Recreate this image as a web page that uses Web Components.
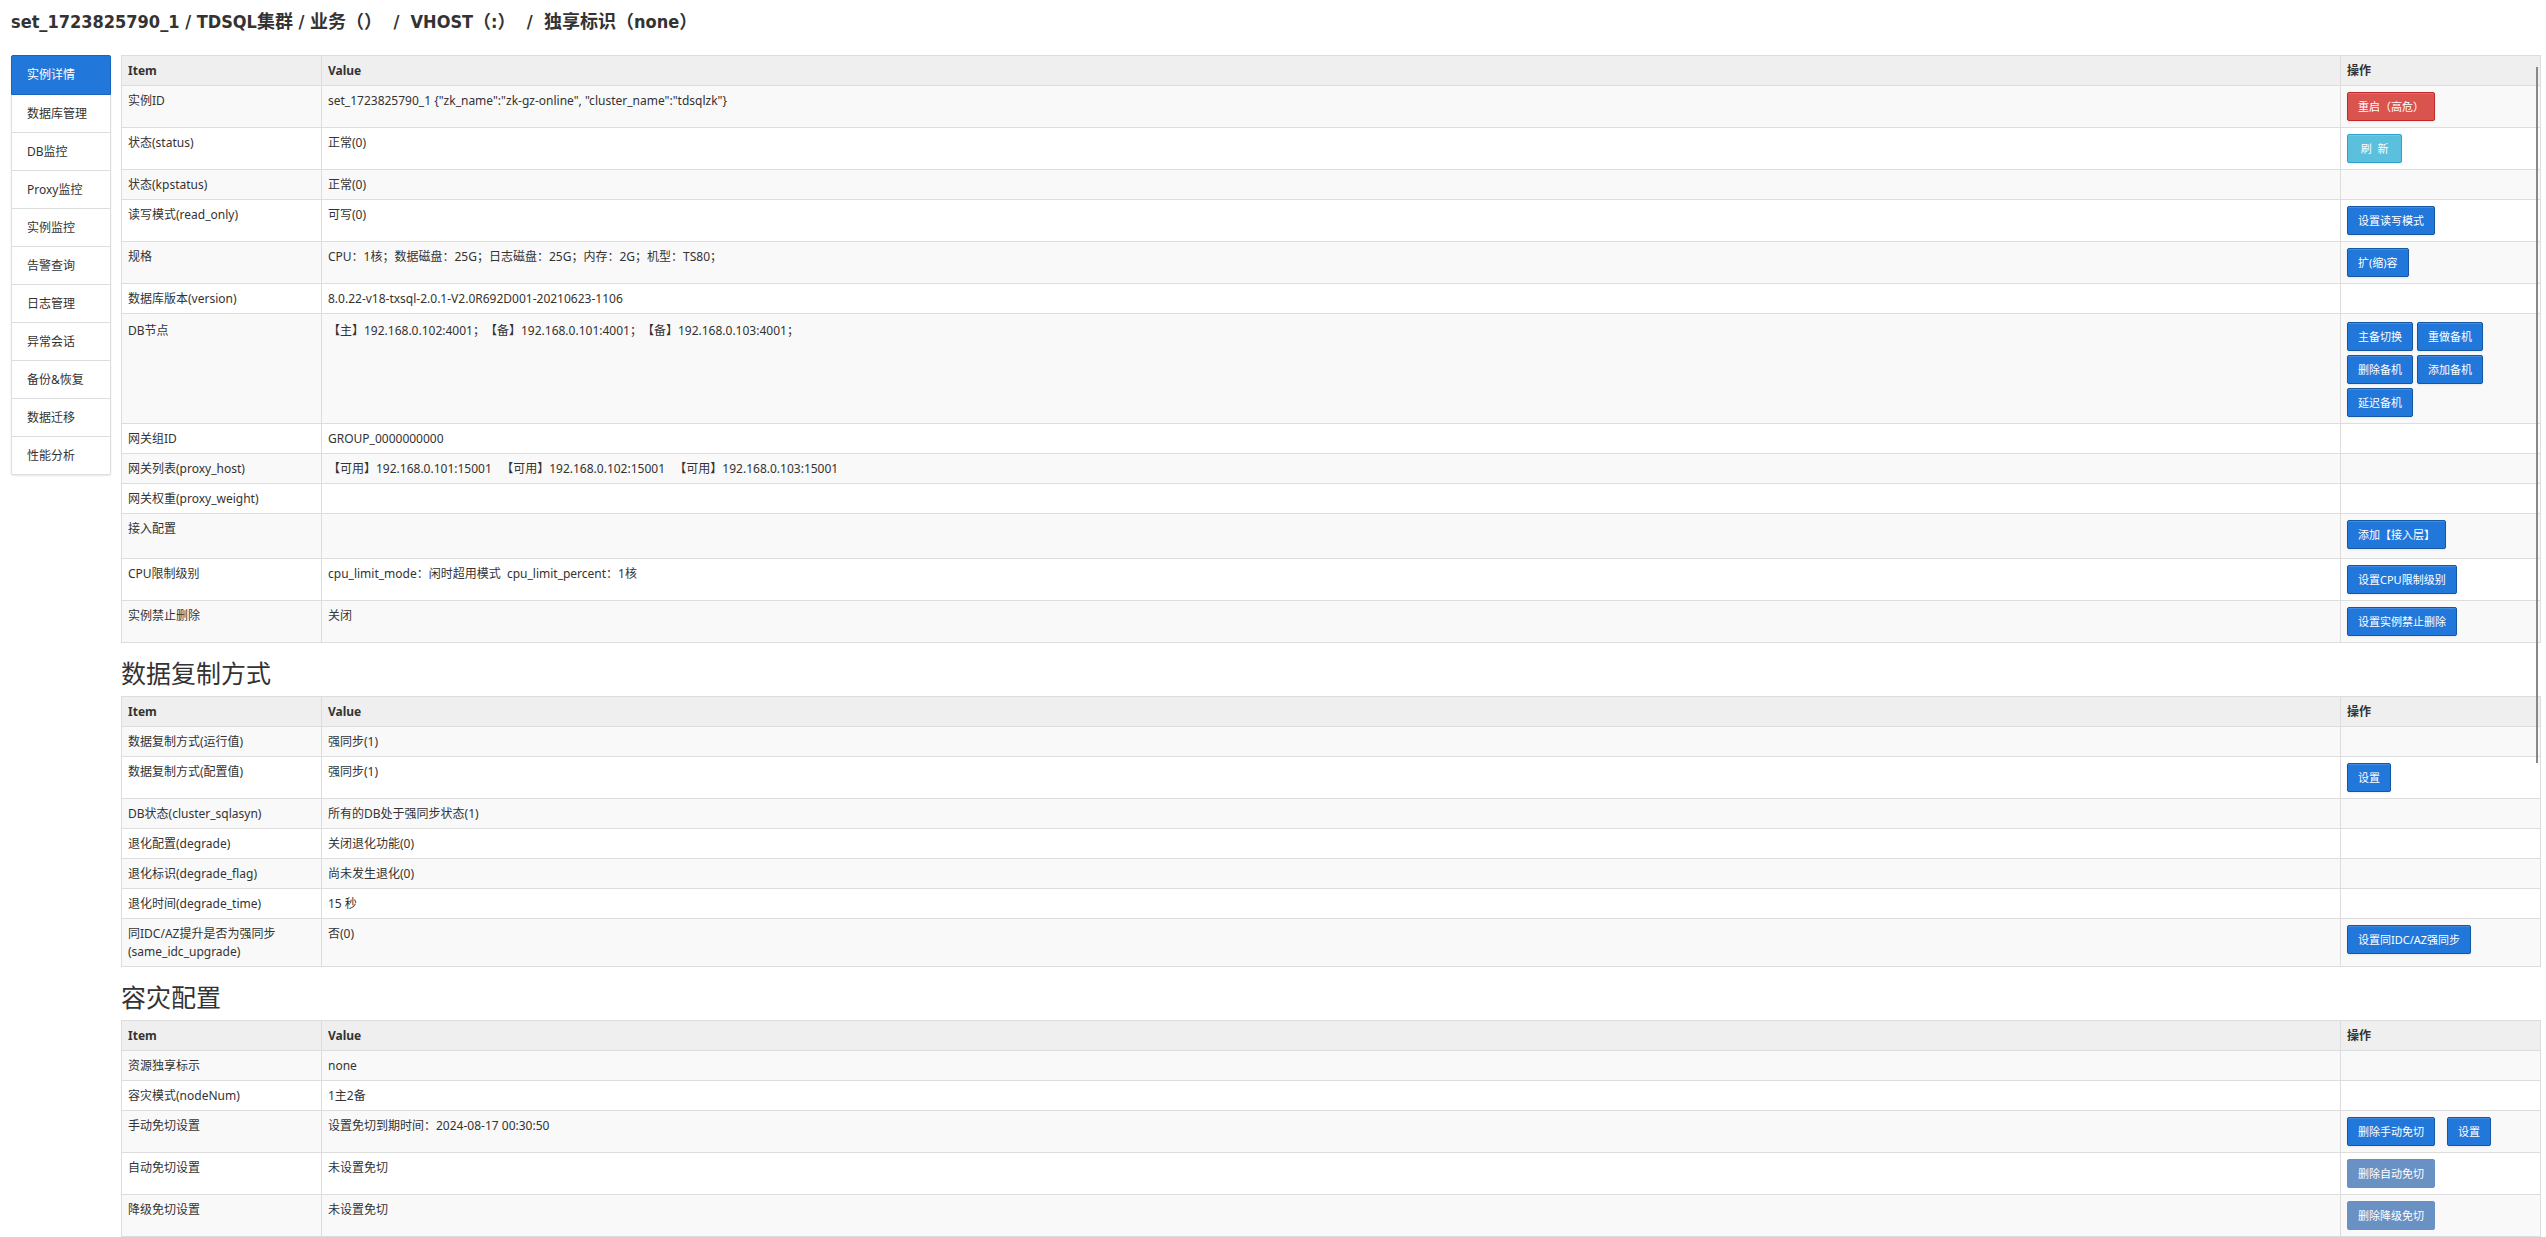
<!DOCTYPE html>
<html lang="zh-CN">
<head>
<meta charset="utf-8">
<title>实例详情</title>
<style>
  body {
    margin: 0;
    color: #333;
    background-color: #fff;
    font: 12px/18px "Noto Sans", "Noto Sans CJK SC", sans-serif;
    text-spacing-trim: space-all;
  }
</style>
</head>
<body>
<instance-page>
  <span slot="title">set_1723825790_1 / TDSQL集群 / 业务（）&nbsp; /&nbsp; VHOST（:）&nbsp; /&nbsp; 独享标识（none）</span>
  <side-nav slot="nav">
    <nav-item active>实例详情</nav-item>
    <nav-item>数据库管理</nav-item>
    <nav-item>DB监控</nav-item>
    <nav-item>Proxy监控</nav-item>
    <nav-item>实例监控</nav-item>
    <nav-item>告警查询</nav-item>
    <nav-item>日志管理</nav-item>
    <nav-item>异常会话</nav-item>
    <nav-item>备份&amp;恢复</nav-item>
    <nav-item>数据迁移</nav-item>
    <nav-item>性能分析</nav-item>
  </side-nav>
  <info-table name="detail"></info-table>
  <info-table name="replication"><span slot="heading">数据复制方式</span></info-table>
  <info-table name="disaster"><span slot="heading">容灾配置</span></info-table>
</instance-page>

<script>
// each row: item, value, list of buttons, optional row class
const TABLES = {
  detail: [
    ['实例ID', 'set_1723825790_1 {"zk_name":"zk-gz-online", "cluster_name":"tdsqlzk"}', [['重启（高危）', 'danger']]],
    ['状态(status)', '正常(0)', [['&nbsp;刷&nbsp;&nbsp;新&nbsp;', 'info']]],
    ['状态(kpstatus)', '正常(0)'],
    ['读写模式(read_only)', '可写(0)', [['设置读写模式']]],
    ['规格', 'CPU：1核；数据磁盘：25G；日志磁盘：25G；内存：2G；机型：TS80；', [['扩(缩)容']]],
    ['数据库版本(version)', '8.0.22-v18-txsql-2.0.1-V2.0R692D001-20210623-1106'],
    ['DB节点', '【主】192.168.0.102:4001；【备】192.168.0.101:4001；【备】192.168.0.103:4001；',
      [['主备切换'], ['重做备机'], ['删除备机'], ['添加备机'], ['延迟备机']], 'nodes'],
    ['网关组ID', 'GROUP_0000000000'],
    ['网关列表(proxy_host)', '【可用】192.168.0.101:15001&nbsp;&nbsp; 【可用】192.168.0.102:15001&nbsp;&nbsp; 【可用】192.168.0.103:15001'],
    ['网关权重(proxy_weight)', ''],
    ['接入配置', '', [['添加【接入层】']], 'access'],
    ['CPU限制级别', 'cpu_limit_mode：闲时超用模式&nbsp; cpu_limit_percent：1核', [['设置CPU限制级别']]],
    ['实例禁止删除', '关闭', [['设置实例禁止删除']]]
  ],
  replication: [
    ['数据复制方式(运行值)', '强同步(1)'],
    ['数据复制方式(配置值)', '强同步(1)', [['设置']]],
    ['DB状态(cluster_sqlasyn)', '所有的DB处于强同步状态(1)'],
    ['退化配置(degrade)', '关闭退化功能(0)'],
    ['退化标识(degrade_flag)', '尚未发生退化(0)'],
    ['退化时间(degrade_time)', '15 秒'],
    ['同IDC/AZ提升是否为强同步<br>(same_idc_upgrade)', '否(0)', [['设置同IDC/AZ强同步']]]
  ],
  disaster: [
    ['资源独享标示', 'none'],
    ['容灾模式(nodeNum)', '1主2备'],
    ['手动免切设置', '设置免切到期时间：2024-08-17 00:30:50', [['删除手动免切'], ['设置']], 'spaced'],
    ['自动免切设置', '未设置免切', [['删除自动免切', 'disabled']]],
    ['降级免切设置', '未设置免切', [['删除降级免切', 'disabled']]],
    ['', '']
  ]
};

class InstancePage extends HTMLElement {
  constructor() {
    super();
    this.attachShadow({ mode: 'open' });
    this.shadowRoot.innerHTML = `
    <style>
      :host {
        display: flex;
        flex-direction: column;
        position: relative;
        height: 100vh;
        overflow: hidden;
      }

      h1 {
        flex: none;
        margin: 0;
        padding: 10px 11px 21px;
        font-family: "DejaVu Sans Condensed", "Noto Sans CJK SC", sans-serif;
        font-size: 18px;
        line-height: 24px;
      }

      .layout {
        display: flex;
        align-items: flex-start;
        gap: 10px;
        padding: 0 5px 0 11px;
      }

      main {
        flex: 1;
        min-width: 0;
      }

      /* thin overlay scrollbar of the content pane */
      .thumb {
        position: absolute;
        top: 67px;
        right: 8px;
        width: 2px;
        height: 696px;
        background-color: #888;
      }
    </style>
    <h1><slot name="title"></slot></h1>
    <div class="layout">
      <slot name="nav"></slot>
      <main><slot></slot></main>
    </div>
    <div class="thumb"></div>
    `;
  }
}

class SideNav extends HTMLElement {
  constructor() {
    super();
    this.attachShadow({ mode: 'open' });
    this.shadowRoot.innerHTML = `
    <style>
      :host {
        display: block;
        flex: none;
        width: 100px;
        box-sizing: border-box;
        border: 1px solid #ddd;
        border-bottom: 0;
        border-radius: 2px;
        box-shadow: 0 1px 2px rgba(0, 0, 0, 0.1);
      }
    </style>
    <nav><slot></slot></nav>
    `;
  }
}

class NavItem extends HTMLElement {
  constructor() {
    super();
    this.attachShadow({ mode: 'open' });
    this.shadowRoot.innerHTML = `
    <style>
      :host {
        display: block;
      }

      a {
        display: block;
        padding: 10px 15px 9px;
        border-bottom: 1px solid #ddd;
        color: #333;
        text-decoration: none;
      }

      :host([active]) a {
        margin: -1px -1px 0;
        padding: 10px 15px;
        border: 1px solid #1b66bd;
        border-radius: 2px 2px 0 0;
        background-color: #2277da;
        color: #fff;
      }
    </style>
    <a href="#"><slot></slot></a>
    `;
  }
}

class OpButton extends HTMLElement {
  constructor() {
    super();
    this.attachShadow({ mode: 'open' });
    const kind = this.getAttribute('kind') || '';
    this.shadowRoot.innerHTML = `
    <style>
      :host {
        display: block;
      }

      button {
        display: block;
        height: 29px;
        margin: 0;
        padding: 0 10px;
        border: 1px solid #1657a3;
        border-radius: 2px;
        background-color: #2277da;
        box-shadow: inset 0 1px 0 rgba(255, 255, 255, 0.15), 0 1px 2px rgba(0, 0, 0, 0.08);
        color: #fff;
        font: inherit;
        font-size: 11px;
        white-space: nowrap;
      }

      .danger {
        border-color: #bd2a27;
        background-color: #d9534f;
      }

      .info {
        border-color: #2ea5c8;
        background-color: #5bc0de;
      }

      .disabled {
        border-color: #6a91c3;
        background-color: #6a91c3;
        box-shadow: none;
      }
    </style>
    <button type="button" class="${kind}" ${kind === 'disabled' ? 'disabled' : ''}><slot></slot></button>
    `;
  }
}

class InfoTable extends HTMLElement {
  constructor() {
    super();
    this.attachShadow({ mode: 'open' });
    const rows = TABLES[this.getAttribute('name')];
    const hasHeading = this.querySelector('[slot="heading"]');
    this.shadowRoot.innerHTML = `
    <style>
      :host {
        display: block;
      }

      h2 {
        margin: 0;
        padding: 12px 0 5px;
        font-size: 25px;
        font-weight: 400;
        line-height: 36px;
      }

      table {
        width: 100%;
        table-layout: fixed;
        border-collapse: collapse;
      }

      col.side {
        width: 200px;
      }

      th, td {
        height: 18px;
        padding: 6px 6px 5px;
        border: 1px solid #ddd;
        text-align: left;
        vertical-align: top;
      }

      th {
        background-color: #efefef;
      }

      tbody tr:nth-child(odd) {
        background-color: #f9f9f9;
      }

      .ops {
        display: flex;
        flex-wrap: wrap;
        gap: 4px;
      }

      .ops:not(:empty) {
        padding-bottom: 1px;
      }

      .nodes td {
        padding-top: 8px;
      }

      .access td {
        padding-bottom: 8px;
      }

      .spaced .ops {
        gap: 12px;
      }
    </style>
    ${hasHeading ? '<h2><slot name="heading"></slot></h2>' : ''}
    <table>
      <colgroup><col class="side"><col><col class="side"></colgroup>
      <thead>
        <tr><th>Item</th><th>Value</th><th>操作</th></tr>
      </thead>
      <tbody>
        ${rows.map(([item, value, ops = [], cls = '']) => `
        <tr class="${cls}">
          <td>${item}</td>
          <td>${value}</td>
          <td><div class="ops">${ops.map(([text, kind = '']) => `<op-button kind="${kind}">${text}</op-button>`).join('')}</div></td>
        </tr>`).join('')}
      </tbody>
    </table>
    `;
  }
}

window.customElements.define('op-button', OpButton);
window.customElements.define('nav-item', NavItem);
window.customElements.define('side-nav', SideNav);
window.customElements.define('info-table', InfoTable);
window.customElements.define('instance-page', InstancePage);
</script>
</body>
</html>
